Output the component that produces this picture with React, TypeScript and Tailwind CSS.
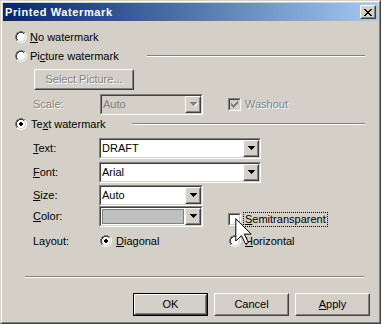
import type { ReactNode } from 'react';

const FACE = '#d4d0c8';

const RADIO_OFF = [
  '....GGGG....',
  '..GGKKKKGG..',
  '.GKKIIIIKLW.',
  '.GKIIIIIILW.',
  'GKIIIIIIIILW',
  'GKIIIIIIIILW',
  'GKIIIIIIIILW',
  'GKIIIIIIIILW',
  '.GKIIIIIILW.',
  '.GLLIIIILLW.',
  '..WWLLLLWW..',
  '....WWWW....',
];

const RADIO_ON = [
  '....GGGG....',
  '..GGKKKKGG..',
  '.GKKIIIIKLW.',
  '.GKIIIIIILW.',
  'GKIIIDDIIILW',
  'GKIIDDDDIILW',
  'GKIIDDDDIILW',
  'GKIIIDDIIILW',
  '.GKIIIIIILW.',
  '.GLLIIIILLW.',
  '..WWLLLLWW..',
  '....WWWW....',
];

const CHECK = ['......X', '.....XX', 'X...XXX', 'XX.XXX.', 'XXXXX..', '.XXX...', '..X....'];

const ARROW = ['XXXXXXX.', '.XXXXX..', '..XXX...', '...X....', '........'];
const ARROW_OFF = ['GGGGGGG.', '.GGGGGWW', '..GGGWW.', '...GWW..', '....W...'];

const CLOSE = ['XX....XX', '.XX..XX.', '..XXXX..', '...XX...', '..XXXX..', '.XX..XX.', 'XX....XX'];

const radioColors = { G: '#808080', K: '#404040', W: '#ffffff', L: FACE, I: '#ffffff', D: '#000000' };

function Pixels({ rows, colors }: { rows: string[]; colors: Record<string, string> }) {
  const w = rows[0].length;
  const h = rows.length;
  return (
    <svg width={w} height={h} viewBox={`0 0 ${w} ${h}`} shapeRendering="crispEdges" className="block shrink-0">
      {rows.flatMap((row, y) =>
        row.split('').map((ch, x) =>
          colors[ch] ? <rect key={`${x}-${y}`} x={x} y={y} width={1} height={1} fill={colors[ch]} /> : null
        )
      )}
    </svg>
  );
}

function Radio({ checked = false }: { checked?: boolean }) {
  return <Pixels rows={checked ? RADIO_ON : RADIO_OFF} colors={radioColors} />;
}

function Check({ checked = false, disabled = false }: { checked?: boolean; disabled?: boolean }) {
  return (
    <div className="h-[13px] w-[13px] shrink-0 border border-t-[#808080] border-l-[#808080] border-r-white border-b-white">
      <div
        className={`h-full w-full border border-t-[#404040] border-l-[#404040] border-r-[#d4d0c8] border-b-[#d4d0c8] p-px ${
          disabled ? 'bg-[#d4d0c8]' : 'bg-white'
        }`}
      >
        {checked && <Pixels rows={CHECK} colors={{ X: disabled ? '#808080' : '#000000' }} />}
      </div>
    </div>
  );
}

function Raised({ className = '', children }: { className?: string; children?: ReactNode }) {
  return (
    <div className={`shrink-0 border border-t-white border-l-white border-r-[#404040] border-b-[#404040] ${className}`}>
      <div className="flex h-full w-full items-center justify-center border border-t-[#d4d0c8] border-l-[#d4d0c8] border-r-[#808080] border-b-[#808080]">
        {children}
      </div>
    </div>
  );
}

function Combo({ className = '', disabled = false, children }: { className?: string; disabled?: boolean; children?: ReactNode }) {
  return (
    <div className={`h-[21px] shrink-0 border border-t-[#808080] border-l-[#808080] border-r-white border-b-white ${className}`}>
      <div
        className={`flex h-full border border-t-[#404040] border-l-[#404040] border-r-[#d4d0c8] border-b-[#d4d0c8] ${
          disabled ? 'bg-[#d4d0c8]' : 'bg-white'
        }`}
      >
        <div className="flex min-w-0 flex-1 items-center">{children}</div>
        <Raised className="h-full w-[16px] bg-[#d4d0c8]">
          <div className="pl-px">
            {disabled ? (
              <Pixels rows={ARROW_OFF} colors={{ G: '#808080', W: '#ffffff' }} />
            ) : (
              <Pixels rows={ARROW} colors={{ X: '#000000' }} />
            )}
          </div>
        </Raised>
      </div>
    </div>
  );
}

function Rule({ className = '' }: { className?: string }) {
  return <div className={`h-[2px] shrink-0 border-t border-b border-t-[#808080] border-b-white ${className}`} />;
}

const disabledText = 'text-[#808080] [text-shadow:1px_1px_0_#ffffff]';

export default function App() {
  return (
    <div className="relative h-[324px] w-[381px] bg-[#d4d0c8] font-['Liberation_Sans',Arial,sans-serif]">
      {/* window frame */}
      <div className="h-full w-full border border-t-[#d4d0c8] border-l-[#d4d0c8] border-r-[#404040] border-b-[#404040]">
        <div className="h-full w-full border border-t-white border-l-white border-r-[#808080] border-b-[#808080] p-px">
          {/* Title bar */}
          <div className="flex h-[18px] items-center justify-between bg-linear-to-r from-[#0a246a] to-[#a6caf0] pl-[2px] pr-[2px]">
            <span className="text-[11px] font-bold leading-none tracking-[0.6px] text-white">Printed Watermark</span>
            <Raised className="h-[14px] w-[16px] bg-[#d4d0c8]">
              <Pixels rows={CLOSE} colors={{ X: '#000000' }} />
            </Raised>
          </div>

          {/* Body */}
          <div className="flex flex-col text-[11px] leading-none text-black">
            <div className="mt-[10px] flex h-[12px] items-center pl-[12px]">
              <Radio />
              <span className="ml-[3px]">
                <u>N</u>o watermark
              </span>
            </div>

            <div className="mt-[7px] flex h-[12px] items-center pl-[12px]">
              <Radio />
              <span className="ml-[3px]">
                Pi<u>c</u>ture watermark
              </span>
              <Rule className="ml-auto mr-[13px] w-[218px]" />
            </div>

            <div className="mt-[7px] flex pl-[31px]">
              <Raised className="h-[21px] w-[100px]">
                <span className={disabledText}>Select Picture...</span>
              </Raised>
            </div>

            <div className="mt-[4px] flex h-[21px] items-center pl-[30px]">
              <span className={`w-[67px] ${disabledText}`}>Scale:</span>
              <Combo className="w-[103px]" disabled>
                <span className="pl-px text-[#808080]">Auto</span>
              </Combo>
              <div className="ml-[25px] flex items-center">
                <Check checked disabled />
                <span className={`ml-[4px] ${disabledText}`}>Washout</span>
              </div>
            </div>

            <div className="mt-[3px] flex h-[12px] items-center pl-[12px]">
              <Radio checked />
              <span className="ml-[4px]">
                Te<u>x</u>t watermark
              </span>
              <Rule className="ml-auto mr-[13px] w-[233px]" />
            </div>

            <div className="mt-[8px] flex h-[21px] items-center pl-[30px]">
              <span className="w-[66px]">
                <u>T</u>ext:
              </span>
              <Combo className="w-[162px]">
                <span className="pl-px">DRAFT</span>
              </Combo>
            </div>

            <div className="mt-[3px] flex h-[21px] items-center pl-[30px]">
              <span className="w-[66px]">
                <u>F</u>ont:
              </span>
              <Combo className="w-[162px]">
                <span className="pl-px">Arial</span>
              </Combo>
            </div>

            <div className="mt-[2px] flex h-[21px] items-center pl-[30px]">
              <span className="w-[66px]">
                <u>S</u>ize:
              </span>
              <Combo className="w-[104px]">
                <span className="pl-px">Auto</span>
              </Combo>
            </div>

            <div className="flex h-[21px] items-start pl-[30px]">
              <span className="w-[66px] self-center">
                <u>C</u>olor:
              </span>
              <Combo className="w-[104px]">
                <div className="h-full w-full p-px">
                  <div className="h-full w-full border border-[#808080] bg-[#c0c0c0]" />
                </div>
              </Combo>
              <div className="ml-[25px] mt-[6px] flex items-center">
                <Check />
                <span className="ml-[2px] border border-dotted border-black px-px py-[1px]">
                  <u>S</u>emitransparent
                </span>
              </div>
            </div>

            <div className="mt-[8px] flex h-[12px] items-center pl-[30px]">
              <span className="w-[67px]">Layout:</span>
              <div className="flex w-[129px] items-center">
                <Radio checked />
                <span className="ml-[4px]">
                  <u>D</u>iagonal
                </span>
              </div>
              <Radio />
              <span className="ml-[4px]">
                <u>H</u>orizontal
              </span>
            </div>

            <Rule className="ml-[22px] mt-[29px] w-[339px]" />

            <div className="mt-[15px] flex gap-[6px] pl-[130px]">
              <div className="h-[23px] w-[75px] border border-black">
                <Raised className="h-full w-full">
                  <span>OK</span>
                </Raised>
              </div>
              <Raised className="h-[23px] w-[75px]">
                <span>Cancel</span>
              </Raised>
              <Raised className="h-[23px] w-[75px]">
                <span>
                  <u>A</u>pply
                </span>
              </Raised>
            </div>
          </div>
        </div>
      </div>

      {/* mouse pointer */}
      <svg
        width="17"
        height="28"
        viewBox="0 0 12 20"
        className="pointer-events-none absolute left-[235px] top-[218px]"
      >
        <path
          d="M0.5 0.5 L0.5 16.5 L4.5 12.5 L7.5 18.5 L9.5 17.5 L6.5 11.5 L11.5 11.5 Z"
          fill="#ffffff"
          stroke="#000000"
          strokeWidth="1"
          vectorEffect="non-scaling-stroke"
        />
      </svg>
    </div>
  );
}
